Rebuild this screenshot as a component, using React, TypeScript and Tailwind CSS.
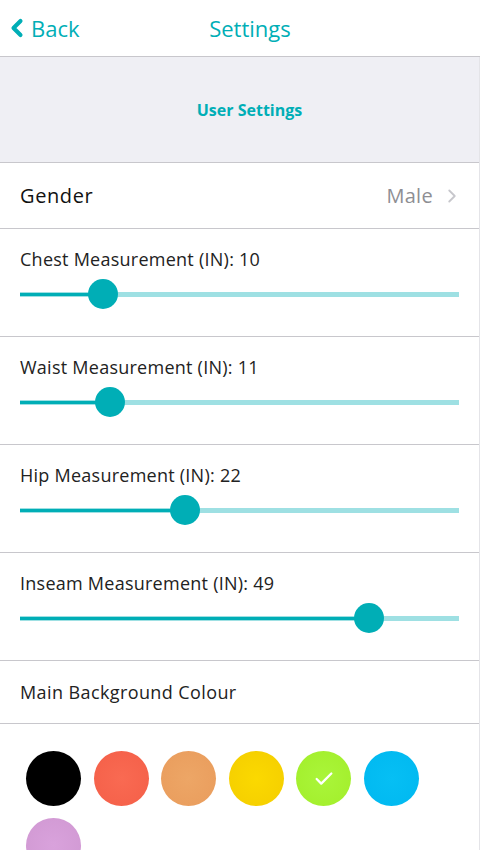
import { ChevronLeft, ChevronRight, Check } from 'lucide-react'

const SLIDERS = [
  { label: 'Chest Measurement (IN): 10', x: 83 },
  { label: 'Waist Measurement (IN): 11', x: 90 },
  { label: 'Hip Measurement (IN): 22', x: 165 },
  { label: 'Inseam Measurement (IN): 49', x: 349 },
]

const COLOURS = [
  { from: '#000000', to: '#000000' },
  { from: '#f96a52', to: '#f45f48' },
  { from: '#eda666', to: '#e99c5c' },
  { from: '#fbd900', to: '#f4cd00' },
  { from: '#aaf53a', to: '#a2ee2a', selected: true },
  { from: '#06bff4', to: '#00b8f0' },
  { from: '#d9a2dc', to: '#d098d2' },
]

function Slider({ label, x }: { label: string; x: number }) {
  return (
    <div className="h-[108px] border-b border-[#c8c7cc] px-5 pt-[19px]">
      <div className="text-[18px] leading-[22px] tracking-[0.25px] text-[#222]">{label}</div>
      <div className="relative mt-[9px] h-[30px]">
        <div className="absolute left-0 right-0 top-[13px] h-[5px] bg-[#9ee0e3]" />
        <div className="absolute left-0 top-[14px] h-[3px] bg-[#00aeb6]" style={{ width: x }} />
        <div
          className="absolute top-0 h-[30px] w-[30px] rounded-full bg-[#00aeb6]"
          style={{ left: x - 15 }}
        />
      </div>
    </div>
  )
}

export default function App() {
  return (
    <div className="w-[480px] h-[850px] overflow-hidden bg-white font-['Open_Sans',sans-serif]">
      {/* Nav bar */}
      <div className="relative flex h-[57px] items-center border-b border-[#c8c7cc]">
        <div className="flex items-center pl-[3px] text-[#00aeb6]">
          <ChevronLeft size={28} strokeWidth={3.5} />
          <span className="ml-0 text-[22px]">Back</span>
        </div>
        <div className="absolute left-0 right-0 text-center text-[22px] text-[#00aeb6] pointer-events-none pl-[20px]">
          Settings
        </div>
      </div>

      <div className="border-r border-[#e4e4e8]">
        {/* Section header */}
        <div className="flex h-[106px] items-center justify-center border-b border-[#c8c7cc] bg-[#efeff4] pl-[20px]">
          <span className="text-[16px] font-bold text-[#00aeb6]">User Settings</span>
        </div>

        {/* Gender */}
        <div className="flex h-[66px] items-center justify-between border-b border-[#c8c7cc] px-5">
          <span className="text-[20px] tracking-[0.6px] text-[#111]">Gender</span>
          <span className="flex items-center text-[20px] tracking-[0.3px] text-[#8e8e93]">
            Male
            <ChevronRight size={22} strokeWidth={2} className="ml-[8px] -mr-[4px] text-[#c7c7cc]" />
          </span>
        </div>

        {SLIDERS.map((s) => (
          <Slider key={s.label} label={s.label} x={s.x} />
        ))}

        {/* Background colour */}
        <div className="flex h-[63px] items-center border-b border-[#c8c7cc] px-5">
          <span className="text-[18px] tracking-[0.4px] text-[#222]">Main Background Colour</span>
        </div>

        <div className="flex flex-wrap gap-x-[12.5px] gap-y-[12px] pl-[26px] pr-[40px] pt-[27px]">
          {COLOURS.map((c, i) => (
            <div
              key={i}
              className="flex h-[55px] w-[55px] items-center justify-center rounded-full"
              style={{ background: `radial-gradient(circle, ${c.from} 0%, ${c.to} 100%)` }}
            >
              {c.selected && <Check size={22} strokeWidth={2.5} className="text-white" />}
            </div>
          ))}
        </div>
      </div>
    </div>
  )
}
